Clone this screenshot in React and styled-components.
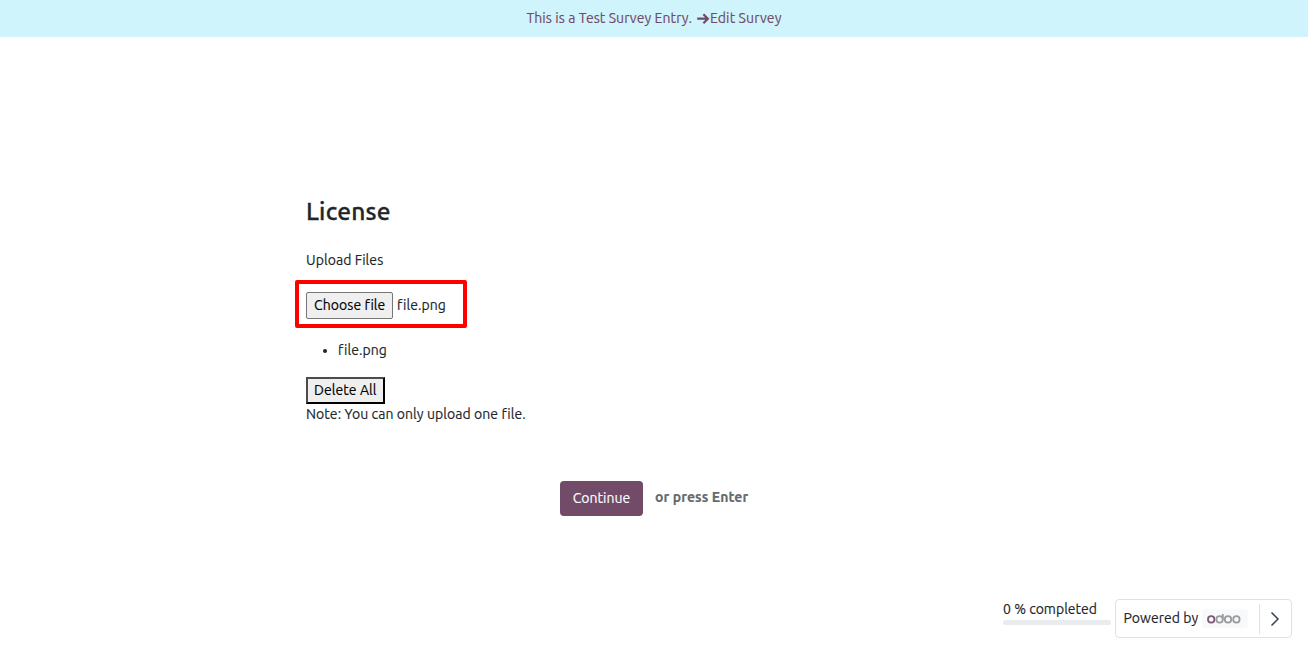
import React from "react";
import styled, { createGlobalStyle } from "styled-components";

const GlobalStyle = createGlobalStyle`
  *, *::before, *::after { box-sizing: border-box; }
  body {
    margin: 0;
    background: #fff;
    color: #212529;
    font: 14px/21px Ubuntu, "Noto Sans", "Open Sans", sans-serif;
    overflow: hidden;
  }
  button { font: inherit; }
`;

const Page = styled.div`
  height: 654px;
  display: flex;
  flex-direction: column;
`;

const Text = styled.span`
  letter-spacing: ${(p) => p.$track ?? 0.07}px;
  -webkit-text-stroke: ${(p) => p.$stroke ?? 0.15}px currentColor;
  white-space: nowrap;
`;

const Banner = styled.header`
  flex: none;
  height: 37px;
  display: flex;
  justify-content: center;
  padding: 8px 0;
  background: #cff4fc;
  color: #714b67;
`;

const BannerLink = styled.a`
  display: flex;
  align-items: center;
  margin-left: 4px;
`;

const Main = styled.main`
  flex: none;
  width: 696px;
  height: 562px;
  margin: 0 auto;
  padding-top: 159px;
`;

const Title = styled.h3`
  margin: 0 0 23px;
  font-size: 24.5px;
  line-height: 31px;
  font-weight: 500;
`;

const Label = styled.div`
  height: 21px;
  margin-bottom: 21px;
`;

const FileRow = styled.div`
  position: relative;
  display: flex;
  align-items: center;
  gap: 4px;
  width: 151px;
  height: 27px;

  &::after {
    content: "";
    position: absolute;
    inset: -12px -10px -9px -11px;
    border: 4px solid #f00;
    border-radius: 2px;
  }
`;

const FileButton = styled.button`
  flex: none;
  width: 87px;
  height: 27px;
  padding: 0 0 0 7px;
  text-align: left;
  background: #efefef;
  color: #000;
  border: 1px solid #767676;
  border-radius: 2px;
`;

const FileList = styled.ul`
  margin: 21px 0 16px;
  padding-left: 32px;
  height: 21px;
`;

const DeleteButton = styled.button`
  display: block;
  width: 79px;
  height: 27px;
  padding: 0 0 0 6px;
  line-height: 21px;
  text-align: left;
  background: #efefef;
  color: #000;
  border: 2px solid;
  border-color: #4c4c4c #000 #000 #4c4c4c;
`;

const Note = styled.div`
  height: 21px;
`;

const Actions = styled.div`
  display: flex;
  justify-content: center;
  gap: 12px;
  width: 188px;
  margin: 56px 0 0 254px;
`;

const Continue = styled.button`
  flex: none;
  width: 83px;
  height: 35px;
  padding: 0 0 1px;
  border: 0;
  border-radius: 4px;
  background: #714b67;
  color: #fff;
`;

const Hint = styled.span`
  flex: none;
  width: 93px;
  padding-top: 6px;
  color: #666a6d;
  font-weight: 700;
`;

const Footer = styled.footer`
  flex: none;
  display: flex;
  justify-content: flex-end;
  gap: 4px;
  padding-right: 16px;
`;

const Progress = styled.div`
  width: 108px;
`;

const Track = styled.div`
  height: 5px;
  border-radius: 3px;
  background: #e9ecef;
`;

const Powered = styled.div`
  display: flex;
  width: 177px;
  height: 39px;
  border: 1px solid #dee2e6;
  border-radius: 4px;
`;

const Brand = styled.div`
  display: flex;
  flex: none;
  width: 143px;
  padding: 8px 0 0 7.5px;
`;

const PoweredLabel = styled.span`
  flex: none;
  width: 78.5px;
`;

const Badge = styled.span`
  flex: none;
  display: flex;
  align-items: center;
  padding-left: 5px;
  width: 46px;
  height: 19px;
  margin-top: 1px;
  border-radius: 4px;
  background: #f8f9fa;
`;

const Next = styled.div`
  display: flex;
  align-items: center;
  padding-left: 10px;
  width: 32px;
  height: 30px;
  margin-top: 4px;
  border-left: 1px solid #dee2e6;
`;

const ArrowIcon = () => (
  <svg width="14" height="12" viewBox="0 0 14 12" fill="none" stroke="#714b67" strokeWidth="2.2">
    <path d="M1.2 5.7H12M7.4 1.2L11.9 5.7L7.4 10.2" />
  </svg>
);

const OdooLogo = () => (
  <svg width="34" height="12" viewBox="0 0 34 12" fill="none" stroke="#9b9b9b" strokeWidth="1.8">
    <circle cx="4.2" cy="6.4" r="3.2" stroke="#7d5674" />
    <circle cx="12.6" cy="6.4" r="3.2" />
    <path d="M15.8 1V6.4" />
    <circle cx="21" cy="6.4" r="3.2" />
    <circle cx="29.4" cy="6.4" r="3.2" />
  </svg>
);

const ChevronIcon = () => (
  <svg width="10" height="16" viewBox="0 0 10 16" fill="none" stroke="#374151" strokeWidth="1.5">
    <path d="M1.5 1.5L8 8L1.5 14.5" />
  </svg>
);

export default function App() {
  return (
    <Page>
      <GlobalStyle />
      <Banner>
        <Text>This is a Test Survey Entry.</Text>
        <BannerLink>
          <ArrowIcon />
          <Text $track={0.12}>Edit Survey</Text>
        </BannerLink>
      </Banner>
      <Main>
        <Title><Text $track={0.2} $stroke={0.3}>License</Text></Title>
        <Label><Text>Upload Files</Text></Label>
        <FileRow>
          <FileButton><Text>Choose file</Text></FileButton>
          <Text>file.png</Text>
        </FileRow>
        <FileList>
          <li><Text>file.png</Text></li>
        </FileList>
        <DeleteButton><Text>Delete All</Text></DeleteButton>
        <Note><Text>Note: You can only upload one file.</Text></Note>
        <Actions>
          <Continue><Text $track={0.04}>Continue</Text></Continue>
          <Hint><Text>or press Enter</Text></Hint>
        </Actions>
      </Main>
      <Footer>
        <Progress>
          <Text $track={0.02}>0 % completed</Text>
          <Track />
        </Progress>
        <Powered>
          <Brand>
            <PoweredLabel><Text $track={0.05}>Powered by</Text></PoweredLabel>
            <Badge><OdooLogo /></Badge>
          </Brand>
          <Next><ChevronIcon /></Next>
        </Powered>
      </Footer>
    </Page>
  );
}
